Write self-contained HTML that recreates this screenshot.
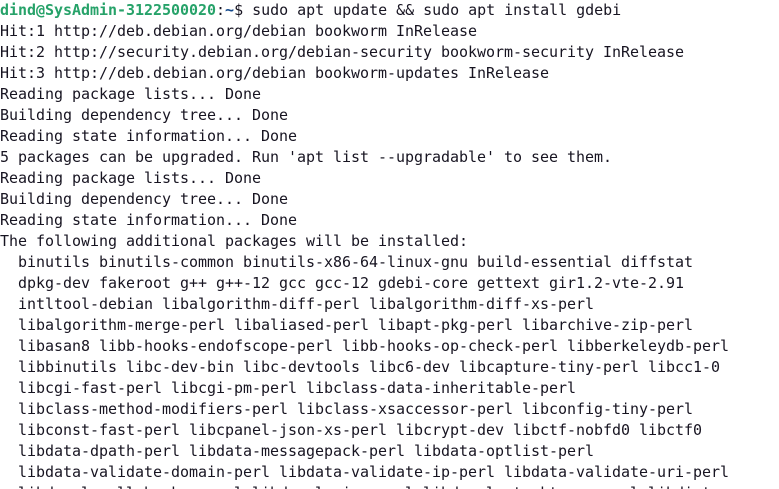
<!DOCTYPE html>
<html><head><meta charset="utf-8"><style>
html,body{margin:0;padding:0;background:#fff;width:779px;height:489px;overflow:hidden}
pre{margin:0;padding:0;font-family:"DejaVu Sans Mono","Liberation Mono",monospace;font-size:15px;letter-spacing:-0.03px;line-height:21px;color:#171421}
.g{color:#26a269;font-weight:bold}.b{color:#12488b;font-weight:bold}
</style></head><body><pre><span class="g">dind@SysAdmin-3122500020</span>:<span class="b">~</span>$ sudo apt update &amp;&amp; sudo apt install gdebi
Hit:1 http://deb.debian.org/debian bookworm InRelease
Hit:2 http://security.debian.org/debian-security bookworm-security InRelease
Hit:3 http://deb.debian.org/debian bookworm-updates InRelease
Reading package lists... Done
Building dependency tree... Done
Reading state information... Done
5 packages can be upgraded. Run 'apt list --upgradable' to see them.
Reading package lists... Done
Building dependency tree... Done
Reading state information... Done
The following additional packages will be installed:
  binutils binutils-common binutils-x86-64-linux-gnu build-essential diffstat
  dpkg-dev fakeroot g++ g++-12 gcc gcc-12 gdebi-core gettext gir1.2-vte-2.91
  intltool-debian libalgorithm-diff-perl libalgorithm-diff-xs-perl
  libalgorithm-merge-perl libaliased-perl libapt-pkg-perl libarchive-zip-perl
  libasan8 libb-hooks-endofscope-perl libb-hooks-op-check-perl libberkeleydb-perl
  libbinutils libc-dev-bin libc-devtools libc6-dev libcapture-tiny-perl libcc1-0
  libcgi-fast-perl libcgi-pm-perl libclass-data-inheritable-perl
  libclass-method-modifiers-perl libclass-xsaccessor-perl libconfig-tiny-perl
  libconst-fast-perl libcpanel-json-xs-perl libcrypt-dev libctf-nobfd0 libctf0
  libdata-dpath-perl libdata-messagepack-perl libdata-optlist-perl
  libdata-validate-domain-perl libdata-validate-ip-perl libdata-validate-uri-perl
  libdevel-callchecker-perl libdevel-size-perl libdevel-stacktrace-perl libdist-
</pre></body></html>
